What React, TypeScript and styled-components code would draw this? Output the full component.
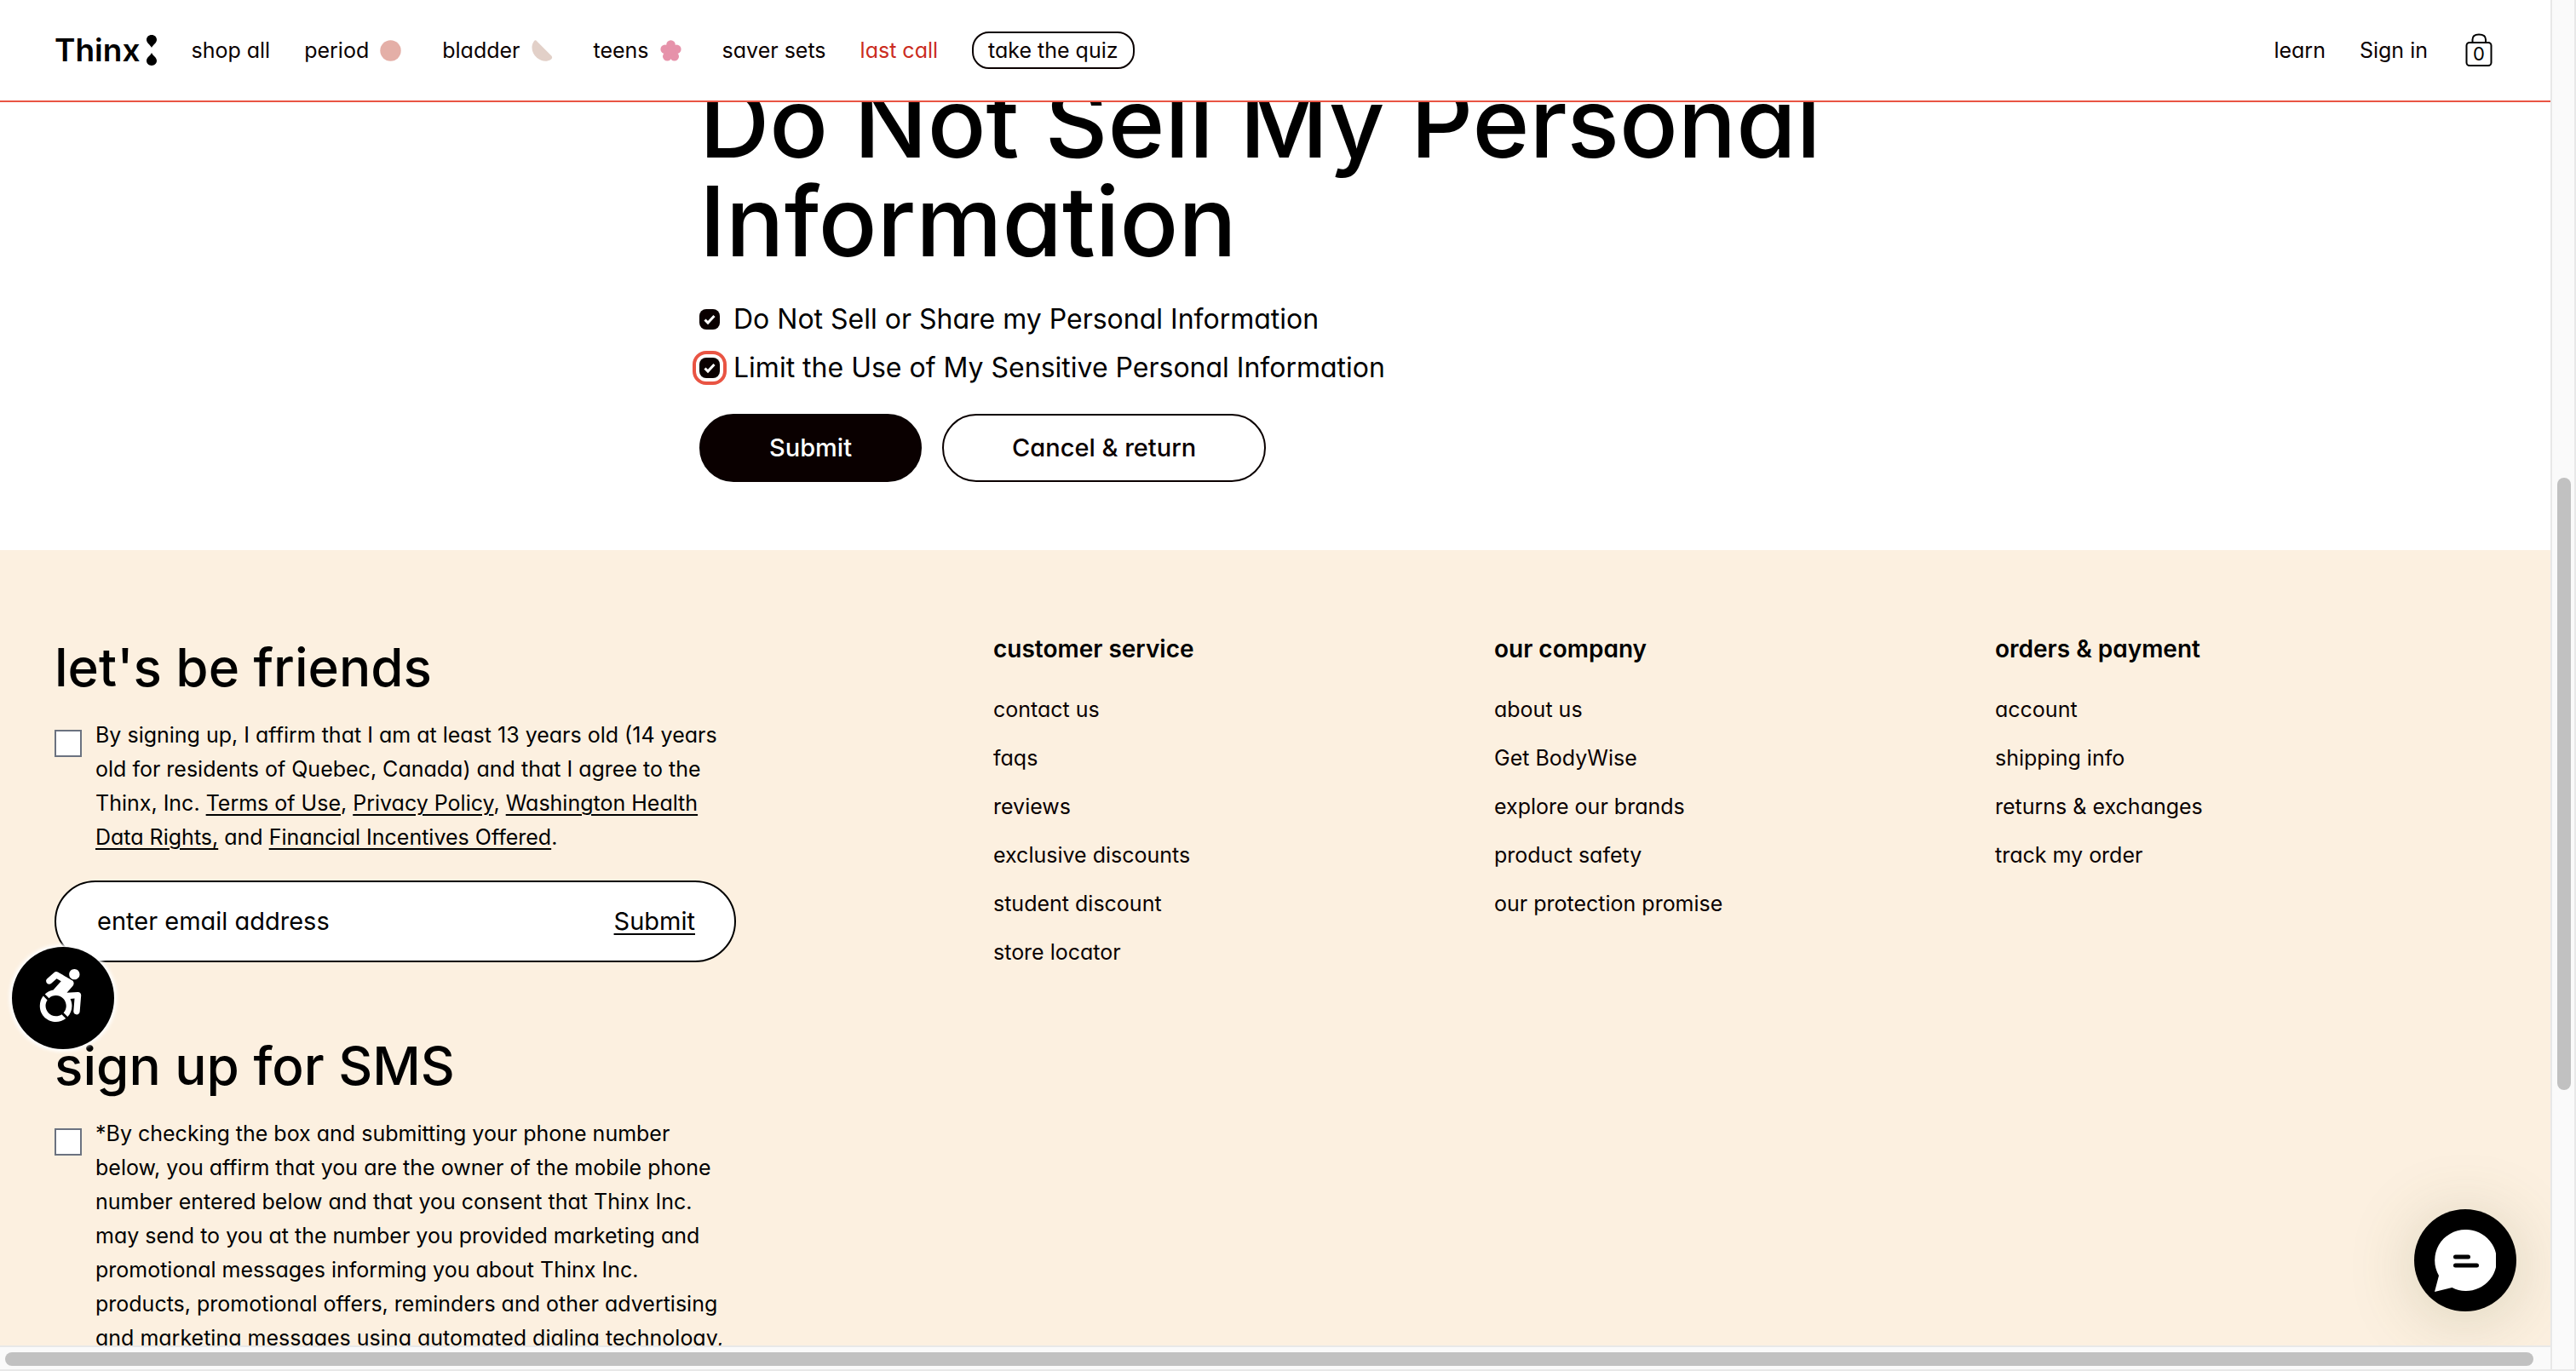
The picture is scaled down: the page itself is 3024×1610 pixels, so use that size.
import React from "react";
import styled, { createGlobalStyle, css } from "styled-components";
import { FaAccessibleIcon } from "react-icons/fa";

const ink = "#0a0000";
const coral = "#e95443";
const cream = "#fcf0e0";

const GlobalStyle = createGlobalStyle`
  *, *::before, *::after { box-sizing: border-box; }
  body {
    margin: 0;
    overflow: hidden;
    background: #fff;
    color: #000;
    font-family: Inter, "Liberation Sans", sans-serif;
    font-feature-settings: "cv11";
    font-size: 25px;
    line-height: 40px;
  }
  h1, h2, h3, ul { margin: 0; padding: 0; }
  h1, h2 { font-weight: 500; }
  ul { list-style: none; }
  a { color: inherit; text-decoration: none; }
  button, input { font: inherit; font-feature-settings: inherit; color: inherit; margin: 0; }
  button { cursor: pointer; }
`;

const Frame = styled.div`
  display: grid;
  grid-template-columns: minmax(0, 1fr) 30px;
  grid-template-rows: minmax(0, 1fr) 30px;
  height: 100vh;
`;

const Viewport = styled.div`
  position: relative;
  overflow: hidden;
`;

const trackLine = "2px solid #e8e8e8";

const VerticalTrack = styled.div`
  grid-row: 1 / 3;
  grid-column: 2;
  padding: 561px 4px 0 6px;
  background: #fafafa;
  border-left: ${trackLine};
  border-right: ${trackLine};
  border-bottom: ${trackLine};
`;

const HorizontalTrack = styled.div`
  grid-row: 2;
  grid-column: 1;
  padding: 6px 20px 4px 6px;
  background: #fafafa;
  border-top: ${trackLine};
  border-bottom: ${trackLine};
`;

const Thumb = styled.div<{ $vertical?: boolean }>`
  height: ${(p) => (p.$vertical ? "719px" : "16px")};
  border-radius: 8px;
  background: #c1c1c1;
`;

const Header = styled.header`
  position: absolute;
  inset: 0 0 auto 0;
  z-index: 2;
  display: flex;
  align-items: center;
  height: 120px;
  padding: 0 64px;
  background: #fff;
  border-bottom: 2px solid ${coral};
`;

const Logo = styled.a`
  display: flex;
  align-items: center;
  gap: 8px;
  margin-right: 40px;
  font-size: 37px;
  font-weight: 600;
`;

const Nav = styled.nav`
  display: flex;
  align-items: center;
  gap: 40px;
  color: ${ink};
`;

const NavLink = styled.a<{ $sale?: boolean }>`
  display: flex;
  align-items: center;
  gap: 13px;
  color: ${(p) => (p.$sale ? "#cb2c20" : "inherit")};

  svg { margin-right: 8px; }
`;

const QuizLink = styled.a`
  padding: 0 17px;
  border: 2px solid ${ink};
  border-radius: 20px;
`;

const Account = styled(Nav)`
  margin-left: auto;
`;

const Bag = styled.button`
  display: flex;
  padding: 0 4px;
  border: 0;
  background: none;
`;

const Main = styled.main`
  max-width: 1352px;
  margin: 0 auto;
  padding: 86px 0 80px;
`;

const Title = styled.h1`
  margin-bottom: 28px;
  font-size: 114px;
  line-height: 116px;
`;

const Option = styled.label`
  display: flex;
  align-items: center;
  gap: 16px;
  font-size: 32px;
  line-height: 57px;
`;

const RoundedCheck = styled.input`
  appearance: none;
  width: 24px;
  height: 24px;
  border-radius: 8px;
  background: ${ink} url("data:image/svg+xml,%3Csvg xmlns='http://www.w3.org/2000/svg' viewBox='0 0 24 24'%3E%3Cpath d='M6.500 12.500l3.500 3.500 7.500-8' fill='none' stroke='white' stroke-width='3'/%3E%3C/svg%3E");

  &:focus {
    outline: 4px solid ${coral};
    outline-offset: 4px;
  }
`;

const Actions = styled.div`
  display: flex;
  gap: 24px;
  margin-top: 26px;
`;

const PillButton = styled.button<{ $filled?: boolean }>`
  height: 80px;
  padding: 0 80px;
  border: 2px solid ${ink};
  border-radius: 40px;
  background: ${(p) => (p.$filled ? ink : "#fff")};
  color: ${(p) => (p.$filled ? "#fff" : ink)};
  font-size: 29px;
  font-weight: 500;
`;

const Footer = styled.footer`
  display: flex;
  justify-content: space-between;
  padding: 96px 64px;
  background: ${cream};
`;

const Signups = styled.div`
  flex: 0 0 800px;
`;

const Signup = styled.form`
  margin-bottom: 80px;
`;

const SignupTitle = styled.h2`
  margin-bottom: 17px;
  font-size: 62px;
  line-height: 84px;
`;

const Consent = styled.div`
  display: flex;
  align-items: flex-start;
  gap: 16px;
`;

const SquareCheck = styled.input`
  appearance: none;
  flex: none;
  width: 32px;
  height: 32px;
  && { margin-top: 14px; }
  border: 2px solid #6b7280;
  background: #fff;
`;

const ConsentText = styled.label`
  a { text-decoration: underline; text-underline-offset: 4px; text-decoration-thickness: 2px; }
`;

const EmailBox = styled.div`
  display: flex;
  align-items: center;
  height: 96px;
  margin-top: 31px;
  padding: 0 46px 0 48px;
  border: 2px solid #000;
  border-radius: 48px;
  background: #fff;
  font-size: 29px;
`;

const EmailInput = styled.input`
  flex: 1;
  min-width: 0;
  padding: 0;
  border: 0;
  outline: 0;
  background: none;

  &::placeholder { color: #000; opacity: 1; }
`;

const TextButton = styled.button`
  padding: 0;
  border: 0;
  background: none;
  text-decoration: underline;
  text-decoration-thickness: 2px;
  text-underline-offset: 4px;
`;

const LinkColumns = styled.nav`
  flex: 0 0 1764px;
  display: grid;
  grid-template-columns: repeat(3, 1fr);
`;

const ColumnTitle = styled.h3`
  margin-bottom: 31px;
  font-size: 28px;
  font-weight: 600;
`;

const LinkList = styled.ul`
  display: grid;
  gap: 17px;
  color: ${ink};
`;

const floating = css`
  position: absolute;
  z-index: 3;
  display: grid;
  place-items: center;
  width: 120px;
  height: 120px;
  padding: 0;
  border: 0;
  border-radius: 50%;
  background: #000;
  color: #fff;
`;

const AccessibilityButton = styled.button`
  ${floating}
  left: 14px;
  bottom: 348px;
  padding: 0 6px 6px 0;
  box-shadow: 0 0 4px 3px #fff;
`;

const ChatButton = styled.button`
  ${floating}
  right: 40px;
  bottom: 40px;
  box-shadow: 0 8px 80px rgba(90, 100, 50, 0.22);
`;

const Drops = () => (
  <svg width="12" height="36" viewBox="0 0 12 36" aria-hidden="true">
    <path d="M6 15C4.500 11.500 0 9.500 0 5.700 0 2.400 2.600 0 6 0s6 2.400 6 5.700C12 9.500 7.500 11.500 6 15Z" />
    <path d="M6 21c1.500 3.500 6 5.500 6 9.300 0 3.300-2.600 5.700-6 5.700s-6-2.400-6-5.700C0 26.500 4.500 24.500 6 21Z" />
  </svg>
);

const Dot = () => (
  <svg width="25" height="25" viewBox="0 0 25 25" aria-hidden="true">
    <circle cx="12.500" cy="12.500" r="12.200" fill="#e4afa7" />
  </svg>
);

const HalfMoon = () => (
  <svg width="25" height="25" viewBox="0 0 25 25" aria-hidden="true">
    <path d="M5.600.8 23.300 18.600c1.400 1.400 1 3.200-.8 4.300C18 25.800 11.500 25.200 6.500 21-.3 15.200-1.200 6.500 3 1.200 3.700.3 4.800 0 5.600.8Z" fill="#e2d0c8" />
  </svg>
);

const Flower = () => (
  <svg width="25" height="25" viewBox="0 0 25 25" aria-hidden="true" fill="#e692aa">
    <circle cx="12.500" cy="5.500" r="5.300" />
    <circle cx="19.300" cy="10.800" r="5.300" />
    <circle cx="16.700" cy="19.200" r="5.300" />
    <circle cx="8.300" cy="19.200" r="5.300" />
    <circle cx="5.700" cy="10.800" r="5.300" />
    <circle cx="12.500" cy="13" r="5" />
  </svg>
);

const BagIcon = () => (
  <svg width="32" height="40" viewBox="0 0 32 40" fill="none" stroke="#000" strokeWidth="2">
    <rect x="1.500" y="11" width="29" height="27" rx="3.500" />
    <path d="M8.500 11V7.500C8.500 3.800 11 1.500 16 1.500s8 2.300 8 6V11" />
    <text x="16" y="31.500" textAnchor="middle" fontSize="22" fill="#000" stroke="none">0</text>
  </svg>
);

const ChatIcon = () => (
  <svg width="72" height="73" viewBox="0 0 72 73" aria-hidden="true">
    <path d="M36 0a36 36 0 1 1-15.500 68L0 73l5-19A36 36 0 0 1 36 0Z" fill="#fff" />
    <path d="M24.500 32H39.500M24.500 42H49.500" stroke="#000" strokeWidth="5" strokeLinecap="round" />
  </svg>
);

const columns = [
  { title: "customer service", links: ["contact us", "faqs", "reviews", "exclusive discounts", "student discount", "store locator"] },
  { title: "our company", links: ["about us", "Get BodyWise", "explore our brands", "product safety", "our protection promise"] },
  { title: "orders & payment", links: ["account", "shipping info", "returns & exchanges", "track my order"] },
];

export default function App() {
  return (
    <>
      <GlobalStyle />
      <Frame>
        <Viewport>
          <Header>
            <Logo href="#">Thinx<Drops /></Logo>
            <Nav aria-label="Shop">
              <NavLink href="#">shop all</NavLink>
              <NavLink href="#">period<Dot /></NavLink>
              <NavLink href="#">bladder<HalfMoon /></NavLink>
              <NavLink href="#">teens<Flower /></NavLink>
              <NavLink href="#">saver sets</NavLink>
              <NavLink href="#" $sale>last call</NavLink>
              <QuizLink href="#">take the quiz</QuizLink>
            </Nav>
            <Account aria-label="Account">
              <NavLink href="#">learn</NavLink>
              <NavLink href="#">Sign in</NavLink>
              <Bag type="button" aria-label="Shopping bag"><BagIcon /></Bag>
            </Account>
          </Header>

          <Main>
            <Title>Do Not Sell My Personal Information</Title>
            <Option>
              <RoundedCheck type="checkbox" defaultChecked />
              Do Not Sell or Share my Personal Information
            </Option>
            <Option>
              <RoundedCheck type="checkbox" defaultChecked autoFocus />
              Limit the Use of My Sensitive Personal Information
            </Option>
            <Actions>
              <PillButton type="button" $filled>Submit</PillButton>
              <PillButton type="button">Cancel &amp; return</PillButton>
            </Actions>
          </Main>

          <Footer>
            <Signups>
              <Signup>
                <SignupTitle>let's be friends</SignupTitle>
                <Consent>
                  <SquareCheck type="checkbox" id="email-consent" />
                  <ConsentText htmlFor="email-consent">
                    By signing up, I affirm that I am at least 13 years old (14 years old for residents of Quebec, Canada) and that I agree to the Thinx, Inc. <a href="#">Terms of Use</a>, <a href="#">Privacy Policy</a>, <a href="#">Washington Health Data Rights,</a> and <a href="#">Financial Incentives Offered</a>.
                  </ConsentText>
                </Consent>
                <EmailBox>
                  <EmailInput type="email" placeholder="enter email address" aria-label="Email address" />
                  <TextButton type="button">Submit</TextButton>
                </EmailBox>
              </Signup>
              <Signup>
                <SignupTitle>sign up for SMS</SignupTitle>
                <Consent>
                  <SquareCheck type="checkbox" id="sms-consent" />
                  <ConsentText htmlFor="sms-consent">
                    *By checking the box and submitting your phone number below, you affirm that you are the owner of the mobile phone number entered below and that you consent that Thinx Inc. may send to you at the number you provided marketing and promotional messages informing you about Thinx Inc. products, promotional offers, reminders and other advertising and marketing messages using automated dialing technology,
                  </ConsentText>
                </Consent>
              </Signup>
            </Signups>
            <LinkColumns aria-label="Footer">
              {columns.map((column) => (
                <div key={column.title}>
                  <ColumnTitle>{column.title}</ColumnTitle>
                  <LinkList>
                    {column.links.map((link) => (
                      <li key={link}><a href="#">{link}</a></li>
                    ))}
                  </LinkList>
                </div>
              ))}
            </LinkColumns>
          </Footer>

          <AccessibilityButton type="button" aria-label="Accessibility options">
            <FaAccessibleIcon size={62} />
          </AccessibilityButton>
          <ChatButton type="button" aria-label="Open chat"><ChatIcon /></ChatButton>
        </Viewport>
        <VerticalTrack><Thumb $vertical /></VerticalTrack>
        <HorizontalTrack><Thumb /></HorizontalTrack>
      </Frame>
    </>
  );
}
